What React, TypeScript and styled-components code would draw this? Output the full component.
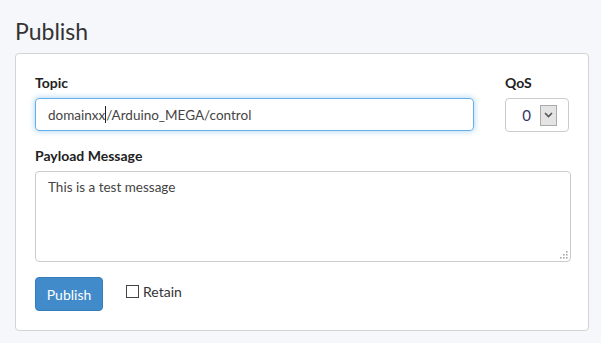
import styled, { createGlobalStyle } from "styled-components";

const GlobalStyle = createGlobalStyle`
  html, body {
    margin: 0;
    padding: 0;
    background: #f6f7fb;
  }
  body {
    font-family: Lato, "Open Sans", "Liberation Sans", sans-serif;
    color: #333;
  }
`;

const Page = styled.div`
  padding: 18px 12px 0 15px;
`;

const Title = styled.h2`
  margin: 0 0 9px;
  font-size: 23px;
  font-weight: 400;
  line-height: 26px;
  color: #333;
`;

const Card = styled.div`
  background: #fff;
  border: 1px solid #d4d4d4;
  border-radius: 4px;
  padding: 19px;
`;

const Row = styled.div`
  display: flex;
  gap: 31px;
  margin-bottom: 14px;
`;

const Group = styled.div<{ $grow?: boolean; $width?: number }>`
  display: flex;
  flex-direction: column;
  flex: ${({ $grow }) => ($grow ? "1" : "none")};
  width: ${({ $width }) => ($width ? `${$width}px` : "auto")};
`;

const Label = styled.label`
  font-size: 14px;
  font-weight: 700;
  line-height: 20px;
  margin-bottom: 5px;
  color: #222;
`;

const Input = styled.div`
  height: 33px;
  box-sizing: border-box;
  border: 1px solid #66afe9;
  border-radius: 4px;
  box-shadow: 0 0 6px rgba(102, 175, 233, 0.6);
  padding: 0 12px;
  display: flex;
  align-items: center;
  font-size: 13.5px;
  color: #444;
`;

const Caret = styled.span`
  display: inline-block;
  width: 1px;
  height: 17px;
  background: #222;
  vertical-align: middle;
`;

const Select = styled.div`
  height: 34px;
  box-sizing: border-box;
  border: 1px solid #ccc;
  border-radius: 4px;
  display: flex;
  align-items: center;
  justify-content: flex-end;
  gap: 9px;
  padding-right: 11px;
  font-size: 15px;
  color: #336;
`;

const ArrowBox = styled.span`
  width: 17px;
  height: 21px;
  box-sizing: border-box;
  border: 1px solid #aaa;
  background: #e4e4e4;
  display: flex;
  align-items: center;
  justify-content: center;
`;

const TextArea = styled.div`
  position: relative;
  height: 91px;
  box-sizing: border-box;
  border: 1px solid #ccc;
  border-radius: 4px;
  padding: 5px 12px;
  font-size: 13.5px;
  line-height: 20px;
  color: #444;
  margin-right: -2px;
`;

const Grip = styled.svg`
  position: absolute;
  right: 1px;
  bottom: 1px;
`;

const Footer = styled.div`
  display: flex;
  align-items: center;
  gap: 23px;
  margin-top: 15px;
`;

const Button = styled.button`
  width: 68px;
  height: 34px;
  border: 1px solid #357ebd;
  border-radius: 4px;
  background: #428bca;
  color: #fff;
  font-family: inherit;
  font-size: 14px;
  padding: 0;
`;

const Check = styled.label`
  display: flex;
  align-items: center;
  gap: 4px;
  font-size: 14px;
  color: #333;
  margin-top: -5px;
`;

const Box = styled.span`
  width: 13px;
  height: 13px;
  box-sizing: border-box;
  border: 1px solid #444;
  background: #fff;
`;

const App = () => {
  return (
    <Page>
      <GlobalStyle />
      <Title>Publish</Title>
      <Card>
        <Row>
          <Group $grow>
            <Label>Topic</Label>
            <Input>
              domainxx<Caret />/Arduino_MEGA/control
            </Input>
          </Group>
          <Group $width={64}>
            <Label>QoS</Label>
            <Select>
              0
              <ArrowBox>
                <svg width="9" height="6" viewBox="0 0 9 6">
                  <path d="M1 1 L4.5 4.5 L8 1" fill="none" stroke="#555" strokeWidth="1.6" />
                </svg>
              </ArrowBox>
            </Select>
          </Group>
        </Row>
        <Group>
          <Label>Payload Message</Label>
          <TextArea>
            This is a test message
            <Grip width="10" height="10" viewBox="0 0 10 10">
              {[
                [8, 2],
                [5, 5],
                [8, 5],
                [2, 8],
                [5, 8],
                [8, 8],
              ].map(([x, y]) => (
                <rect key={`${x}-${y}`} x={x - 1} y={y - 1} width="1.6" height="1.6" fill="#aaa" />
              ))}
            </Grip>
          </TextArea>
        </Group>
        <Footer>
          <Button>Publish</Button>
          <Check>
            <Box />
            Retain
          </Check>
        </Footer>
      </Card>
    </Page>
  );
};

export default App;
